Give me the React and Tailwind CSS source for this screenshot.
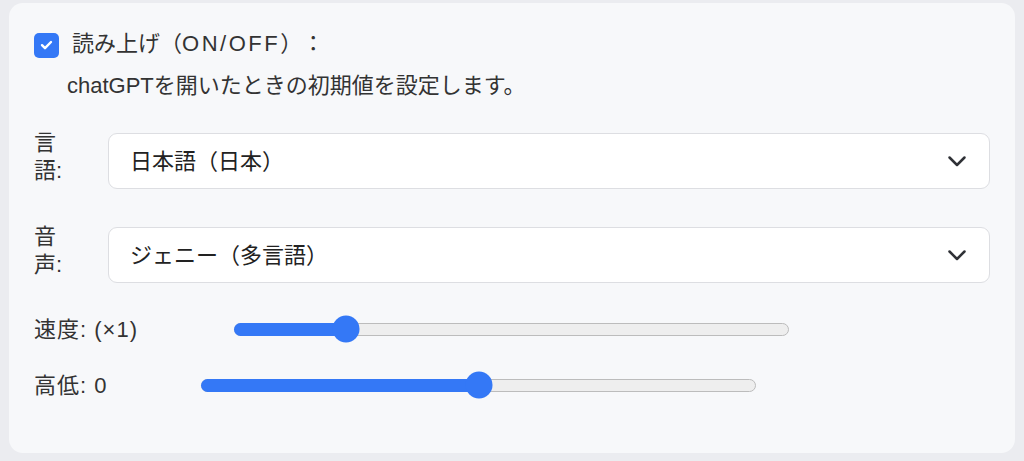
const font = { fontFamily: '"Liberation Sans", "Noto Sans CJK JP", sans-serif' };

const Chevron = () => (
  <svg width="20" height="12" viewBox="0 0 20 12" fill="none">
    <path d="M2.5 2.5l7.5 7.5 7.5-7.5" stroke="#2f3136" strokeWidth="2.5" strokeLinecap="round" strokeLinejoin="round" />
  </svg>
);

const SelectRow = ({ label1, label2, value }) => (
  <div className="flex items-start">
    <div className="w-[30px] text-[22px] leading-[28px] text-[#333] -mt-[4px]">
      {label1}
      <br />
      {label2}
    </div>
    <div className="ml-[44px] flex-1 h-[56px] bg-white border border-[#dddee2] rounded-[9px] flex items-center justify-between pl-[21px] pr-[22px]">
      <span className="text-[22px] text-[#222] [text-spacing-trim:space-all]">{value}</span>
      <Chevron />
    </div>
  </div>
);

const Slider = ({ value }) => (
  <div className="relative w-[555px] h-[13px] rounded-full bg-[#eeeeee] border border-[#bcbcbc]">
    <div className="absolute -left-px -top-px h-[13px] rounded-full bg-[#3478f6]" style={{ width: `calc(${value}% + 2px)` }} />
    <div
      className="absolute top-1/2 w-[27px] h-[27px] rounded-full bg-[#3478f6] -translate-x-1/2 -translate-y-1/2"
      style={{ left: `${value}%` }}
    />
  </div>
);

export default function App() {
  return (
    <div className="w-full h-[461px] bg-[#ebecf0] pt-[3px] px-[9px]" style={font}>
      <div className="h-[450px] bg-[#f7f8fa] rounded-[14px] pl-[25px] pr-[25px] pt-[28px]">
        <div className="flex items-center">
          <div className="w-[25px] h-[25px] rounded-[5px] bg-[#3478f6] flex items-center justify-center">
            <svg width="13" height="10" viewBox="0 0 13 10" fill="none">
              <path d="M2 5.2l3 3L11 2" stroke="white" strokeWidth="2.4" strokeLinecap="round" strokeLinejoin="round" />
            </svg>
          </div>
          <span className="ml-[13px] text-[22px] text-[#333] leading-[30px] -mt-[2px] [text-spacing-trim:space-all]">
            読み上げ（<span className="tracking-[2.5px]">ON/OFF</span>）：
          </span>
        </div>
        <p className="ml-[33px] mt-[12px] text-[22px] text-[#333] leading-[30px]">
          chatGPTを開いたときの初期値を設定します。
        </p>
        <div className="mt-[32px] flex flex-col gap-[38px]">
          <SelectRow label1="言" label2="語:" value="日本語（日本）" />
          <SelectRow label1="音" label2="声:" value="ジェニー（多言語）" />
        </div>
        <div className="mt-[31px] flex items-center h-[30px]">
          <span className="w-[200px] shrink-0 text-[22px] text-[#333] tracking-[1px]">速度: (×1)</span>
          <Slider value={20} />
        </div>
        <div className="mt-[26px] flex items-center h-[30px]">
          <span className="w-[167px] shrink-0 text-[22px] text-[#333] tracking-[1px]">高低: 0</span>
          <Slider value={50} />
        </div>
      </div>
    </div>
  );
}
